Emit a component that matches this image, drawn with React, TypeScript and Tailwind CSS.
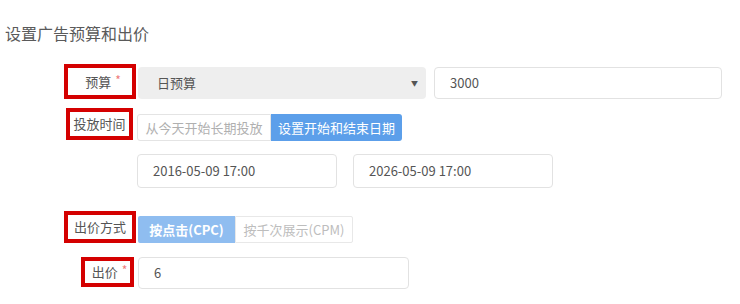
import React from 'react';

const font = { fontFamily: '"Noto Sans CJK SC", "Noto Sans", sans-serif' };

const Star = () => <span className="ml-[4px] text-[12px] leading-none text-[#ee7b7b] relative top-[-2px]">*</span>;

const App: React.FC = () => {
    return (
        <div className="w-[740px] h-[304px] bg-white text-[#555] overflow-hidden flex flex-col" style={font}>
            {/* Title */}
            <div className="pt-[23px] pl-[5px] text-[16px] leading-[20px] text-[#5a5a5a]">设置广告预算和出价</div>

            {/* 预算 */}
            <div className="mt-[21px] flex items-end h-[35px]">
                <div className="ml-[64px] w-[72px] h-[35px] border-[4px] border-[#d40000] flex items-center justify-center pl-[6px] text-[13px] text-[#555]">
                    预算<Star />
                </div>
                <div className="ml-[2px] w-[288px] h-[32px] rounded-[4px] bg-[#eeeeee] flex items-center justify-between pl-[19px] pr-[8px] text-[13px] text-[#555]">
                    <span>日预算</span>
                    <span className="text-[7px] text-[#555]">▼</span>
                </div>
                <div className="ml-[8px] w-[288px] h-[32px] rounded-[4px] border border-[#e2e2e2] flex items-center pl-[15px] text-[13px] text-[#555]">
                    3000
                </div>
            </div>

            {/* 投放时间 */}
            <div className="mt-[9px] flex items-start h-[33px]">
                <div className="ml-[66px] w-[67px] h-[32px] border-[4px] border-[#d40000] flex items-center justify-center text-[13px] text-[#555]">
                    投放时间
                </div>
                <div className="ml-[4px] mt-[6px] flex h-[27px] text-[13px]">
                    <div className="w-[134px] h-full border border-[#e4e4e4] rounded-l-[3px] flex items-center justify-center text-[#b0b0b0]">
                        从今天开始长期投放
                    </div>
                    <div className="w-[131px] h-full bg-[#5c9fea] rounded-r-[3px] flex items-center justify-center text-white">
                        设置开始和结束日期
                    </div>
                </div>
            </div>

            {/* dates */}
            <div className="mt-[13px] pl-[137px] flex gap-[16px]">
                <div className="w-[200px] h-[34px] rounded-[4px] border border-[#e2e2e2] flex items-center pl-[15px] text-[13px] text-[#555]">
                    2016-05-09 17:00
                </div>
                <div className="w-[200px] h-[34px] rounded-[4px] border border-[#e2e2e2] flex items-center pl-[15px] text-[13px] text-[#555]">
                    2026-05-09 17:00
                </div>
            </div>

            {/* 出价方式 */}
            <div className="mt-[23px] flex items-end h-[32px]">
                <div className="ml-[64px] w-[72px] h-[32px] border-[4px] border-[#d40000] flex items-center justify-center text-[13px] text-[#555]">
                    出价方式
                </div>
                <div className="ml-[2px] flex h-[27px] text-[13px]">
                    <div className="w-[97px] h-full bg-[#8fbdf0] rounded-l-[2px] flex items-center justify-center text-white font-bold">
                        按点击(CPC)
                    </div>
                    <div className="w-[118px] h-full border border-[#e8e8e8] rounded-r-[2px] flex items-center justify-center text-[#bdbdbd]">
                        按千次展示(CPM)
                    </div>
                </div>
            </div>

            {/* 出价 */}
            <div className="mt-[14px] flex items-start">
                <div className="ml-[81px] w-[53px] h-[30px] border-[4px] border-[#d40000] flex items-center justify-center pl-[4px] text-[13px] text-[#555]">
                    出价<Star />
                </div>
                <div className="ml-[4px] w-[271px] h-[32px] rounded-[4px] border border-[#e2e2e2] flex items-center pl-[15px] text-[13px] text-[#555]">
                    6
                </div>
            </div>
        </div>
    );
};

export default App;
